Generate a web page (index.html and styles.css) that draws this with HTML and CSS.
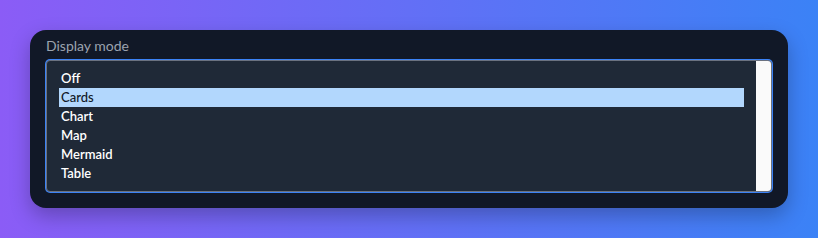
FILE: index.html
```html
<!DOCTYPE html>
<html lang="en">
<head>
    <meta charset="UTF-8">
    <meta name="viewport" content="width=device-width, initial-scale=1.0">
    <title>Display mode</title>
    <link rel="stylesheet" href="styles.css">
</head>
<body>
    <div class="card">
        <div class="label">Display mode</div>
        <div class="listbox">
            <div class="options">
                <div class="option">Off</div>
                <div class="option selected">Cards</div>
                <div class="option">Chart</div>
                <div class="option">Map</div>
                <div class="option">Mermaid</div>
                <div class="option">Table</div>
            </div>
            <div class="scrollbar"></div>
        </div>
    </div>
</body>
</html>
```

FILE: styles.css
```css
html, body {
    height: 100%;
}
body {
    margin: 0;
    padding: 30px;
    box-sizing: border-box;
    background: linear-gradient(90deg, #8b5cf6, #3b82f6);
    font-family: Lato, "Noto Sans", sans-serif;
}
.card {
    background-color: #111827;
    border-radius: 16px;
    padding: 8px 16px 16px 16px;
    box-shadow: 0 8px 20px rgba(0, 0, 0, 0.25);
}
.label {
    color: #9ca3af;
    font-size: 14px;
    line-height: 16px;
    margin-bottom: 6px;
}
.listbox {
    display: flex;
    background-color: #1f2937;
    border: 1px solid #6b7280;
    border-radius: 4px;
    box-shadow: 0 0 0 1px #3b82f6;
    height: 130px;
    overflow: hidden;
}
.options {
    flex: 1;
    padding: 8px 12px 0 12px;
}
.option {
    color: #ffffff;
    font-size: 13px;
    line-height: 19px;
    padding-left: 2px;
    font-weight: 600;
}
.option.selected {
    background-color: #b2d7fd;
    color: #111827;
    font-weight: 500;
}
.scrollbar {
    width: 15px;
    background-color: #fafafa;
}
```
